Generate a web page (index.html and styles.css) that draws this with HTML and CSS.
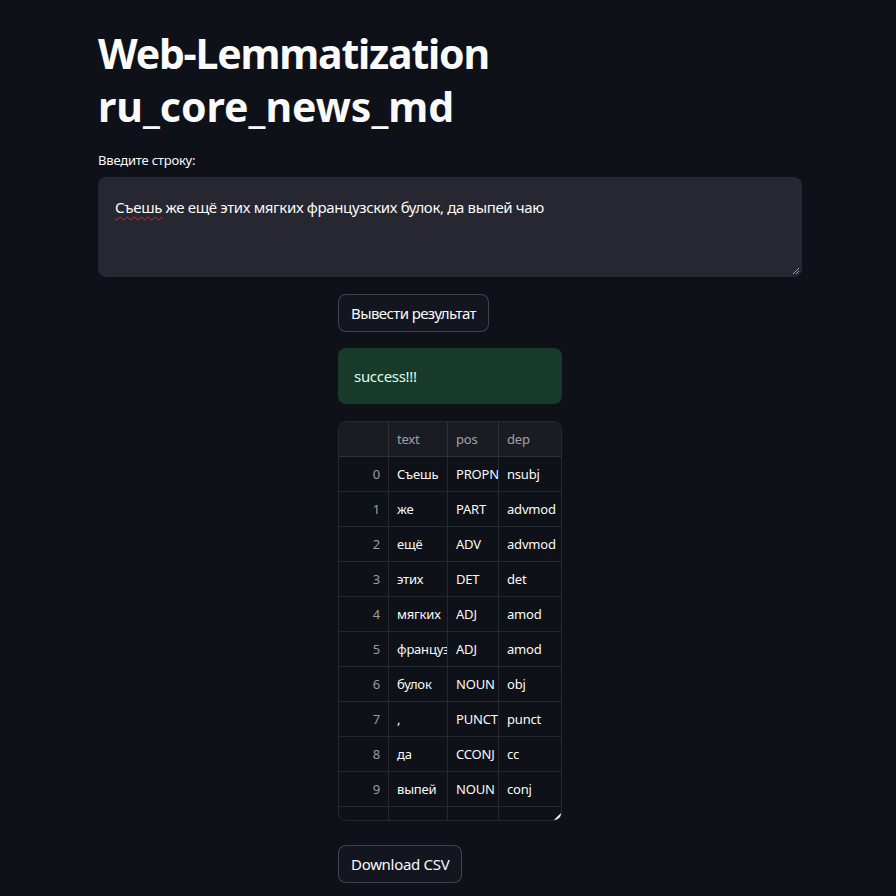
FILE: index.html
```html
<!DOCTYPE html>
<html lang="ru">
<head>
<meta charset="utf-8">
<title>Web-Lemmatization</title>
<link rel="stylesheet" href="styles.css">
</head>
<body>
<main class="main">
  <h1 class="title"><span class="l1">Web-Lemmatization</span><br><span class="l2">ru_core_news_md</span></h1>
  <label class="label">Введите строку:</label>
  <div class="textarea"><span class="misspelled">Съешь</span> же ещё этих мягких французских булок, да выпей чаю
    <svg class="grip" width="8" height="8" viewBox="0 0 8 8"><path d="M1 7 L7 1 M4 7 L7 4" stroke="#9a9aa2" stroke-width="1"/></svg>
  </div>
  <div class="cols">
    <div class="col"></div>
    <div class="col center">
      <button class="btn run">Вывести результат</button>
      <div class="alert">success!!!</div>
      <div class="grid-wrap">
        <div class="grid">
          <div class="row head"><div class="c idx"></div><div class="c t">text</div><div class="c p">pos</div><div class="c d">dep</div></div>
          <div class="row"><div class="c idx">0</div><div class="c t">Съешь</div><div class="c p">PROPN</div><div class="c d">nsubj</div></div>
          <div class="row"><div class="c idx">1</div><div class="c t">же</div><div class="c p">PART</div><div class="c d">advmod</div></div>
          <div class="row"><div class="c idx">2</div><div class="c t">ещё</div><div class="c p">ADV</div><div class="c d">advmod</div></div>
          <div class="row"><div class="c idx">3</div><div class="c t">этих</div><div class="c p">DET</div><div class="c d">det</div></div>
          <div class="row"><div class="c idx">4</div><div class="c t">мягких</div><div class="c p">ADJ</div><div class="c d">amod</div></div>
          <div class="row"><div class="c idx">5</div><div class="c t">французских</div><div class="c p">ADJ</div><div class="c d">amod</div></div>
          <div class="row"><div class="c idx">6</div><div class="c t">булок</div><div class="c p">NOUN</div><div class="c d">obj</div></div>
          <div class="row"><div class="c idx">7</div><div class="c t">,</div><div class="c p">PUNCT</div><div class="c d">punct</div></div>
          <div class="row"><div class="c idx">8</div><div class="c t">да</div><div class="c p">CCONJ</div><div class="c d">cc</div></div>
          <div class="row"><div class="c idx">9</div><div class="c t">выпей</div><div class="c p">NOUN</div><div class="c d">conj</div></div>
          <div class="row"><div class="c idx"></div><div class="c t"></div><div class="c p"></div><div class="c d"></div></div>
        </div>
        <div class="handle"></div>
      </div>
      <button class="btn dl">Download CSV</button>
    </div>
    <div class="col"></div>
  </div>
</main>
</body>
</html>
```
FILE: styles.css
```css
* { box-sizing: border-box; }
html, body { margin: 0; padding: 0; background: #0e1117; }
body {
  color: #fafafa;
  font-family: "Noto Sans", "Open Sans", sans-serif;
  font-size: 16px;
}
.main {
  width: 704px;
  margin: 0 0 0 98px;
  padding: 27px 0 0 0;
  display: flex;
  flex-direction: column;
}
.title {
  margin: 0 0 18px 0;
  font-size: 41px;
  line-height: 53px;
  font-weight: 700;
  color: #fafafa;
}
.l1 { letter-spacing: -1.2px; }
.l2 { letter-spacing: 0; }
.label {
  font-size: 13px;
  line-height: 18px;
  margin-bottom: 8px;
  letter-spacing: -0.2px;
}
.textarea {
  position: relative;
  height: 100px;
  background: #262730;
  border-radius: 8px;
  padding: 18px 17px;
  font-size: 15px;
  line-height: 24px;
  letter-spacing: -0.35px;
}
.misspelled {
  text-decoration: underline wavy #e0242a;
  text-decoration-thickness: 1px;
  text-underline-offset: 3px;
}
.grip { position: absolute; right: 2px; bottom: 2px; }
.cols {
  display: grid;
  grid-template-columns: 224px 224px 224px;
  gap: 16px;
  margin-top: 17px;
}
.center { display: flex; flex-direction: column; align-items: flex-start; }
.btn {
  font-family: inherit;
  font-size: 15px;
  letter-spacing: -0.3px;
  color: #fafafa;
  background: #13161e;
  border: 1px solid rgba(250,250,250,0.2);
  border-radius: 8px;
  height: 38px;
  padding: 0 12px;
}
.btn.run { letter-spacing: -0.6px; }
.alert {
  margin-top: 16px;
  width: 224px;
  height: 56px;
  border-radius: 8px;
  background: #173a2a;
  color: #dffde9;
  padding: 16px;
  font-size: 15px;
  line-height: 24px;
  letter-spacing: -0.3px;
}
.grid-wrap {
  position: relative;
  margin-top: 17px;
  width: 224px;
  height: 400px;
  border: 1px solid rgba(250,250,250,0.1);
  border-radius: 8px;
  overflow: hidden;
}
.grid { display: flex; flex-direction: column; }
.row {
  display: grid;
  grid-template-columns: 50px 59px 51px 80px;
  height: 35px;
  border-bottom: 1px solid rgba(250,250,250,0.1);
}
.row.head { background: #1a1c24; color: rgba(250,250,250,0.6); }
.c {
  padding: 0 8px;
  display: flex;
  align-items: center;
  font-size: 13px;
  letter-spacing: -0.2px;
  white-space: nowrap;
  overflow: hidden;
  border-right: 1px solid rgba(250,250,250,0.1);
}
.c.idx { justify-content: flex-end; color: rgba(250,250,250,0.6); }
.c.d { border-right: none; }
.handle {
  position: absolute;
  right: 0;
  bottom: 0;
  width: 0;
  height: 0;
  border-style: solid;
  border-width: 0 0 7px 7px;
  border-color: transparent transparent #fafafa transparent;
}
.dl { margin-top: 24px; }
```
